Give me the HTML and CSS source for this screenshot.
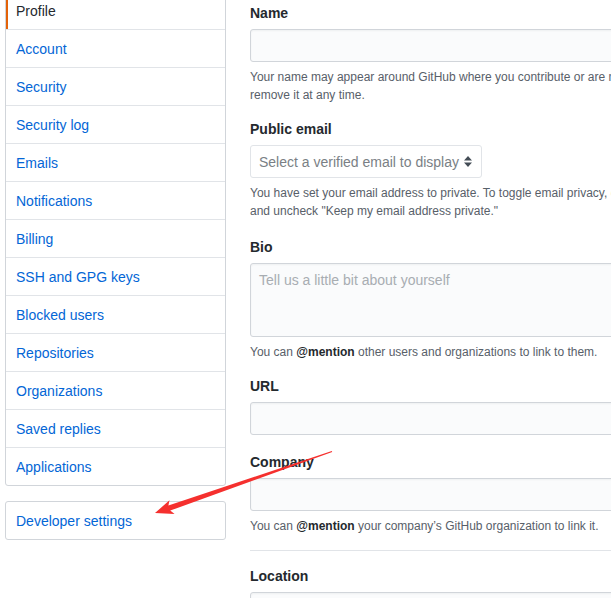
FILE: index.html
```html
<!DOCTYPE html>
<html lang="en">
<head>
    <meta charset="UTF-8">
    <meta name="viewport" content="width=device-width, initial-scale=1.0">
    <title>Public profile</title>
    <link rel="stylesheet" href="styles.css">
</head>
<body>

    <div class="layout">
        <div class="sidebar">
            <nav class="menu">
                <a class="menu-item selected" href="#">Profile</a>
                <a class="menu-item" href="#">Account</a>
                <a class="menu-item" href="#">Security</a>
                <a class="menu-item" href="#">Security log</a>
                <a class="menu-item" href="#">Emails</a>
                <a class="menu-item" href="#">Notifications</a>
                <a class="menu-item" href="#">Billing</a>
                <a class="menu-item" href="#">SSH and GPG keys</a>
                <a class="menu-item" href="#">Blocked users</a>
                <a class="menu-item" href="#">Repositories</a>
                <a class="menu-item" href="#">Organizations</a>
                <a class="menu-item" href="#">Saved replies</a>
                <a class="menu-item" href="#">Applications</a>
            </nav>
            <nav class="menu">
                <a class="menu-item" href="#">Developer settings</a>
            </nav>
        </div>

        <form class="profile-form">
            <div class="form-group">
                <label for="name">Name</label>
                <input class="form-control" type="text" id="name">
                <p class="note">Your name may appear around GitHub where you contribute or are mentioned. You can remove it at any time.</p>
            </div>

            <div class="form-group email-group">
                <label for="email">Public email</label>
                <div class="select">
                    <span>Select a verified email to display</span>
                    <svg width="8" height="11" viewBox="0 0 8 11"><path d="M4 0L8 4.5H0z M4 11L0 6.5H8z" fill="#444d56"/></svg>
                </div>
                <p class="note">You have set your email address to private. To toggle email privacy, go to <a href="#">email settings</a> and uncheck "Keep my email address private."</p>
            </div>

            <div class="form-group">
                <label for="bio">Bio</label>
                <textarea class="form-control bio" id="bio" placeholder="Tell us a little bit about yourself"></textarea>
                <p class="note">You can <strong>@mention</strong> other users and organizations to link to them.</p>
            </div>

            <div class="form-group url-group">
                <label for="url">URL</label>
                <input class="form-control" type="text" id="url">
            </div>

            <div class="form-group">
                <label for="company">Company</label>
                <input class="form-control" type="text" id="company">
                <p class="note">You can <strong>@mention</strong> your company’s GitHub organization to link it.</p>
            </div>

            <hr>

            <div class="form-group">
                <label for="location">Location</label>
                <input class="form-control" type="text" id="location">
            </div>
        </form>
    </div>

    <!-- screenshot annotation -->
    <svg class="annotation" width="611" height="598" viewBox="0 0 611 598">
        <polygon points="155,513 169.5,500.3 168.4,505.4 331.8,451 332.2,452 170.2,510.6 174.6,513.9" fill="#f5302e"/>
    </svg>

</body>
</html>
```

FILE: styles.css
```css
html, body {
    overflow: hidden;
}

body {
    font-family: "Liberation Sans", Arial, sans-serif;
    font-size: 14px;
    color: #24292e;
    margin: 0;
    background: #fff;
}

.layout {
    display: flex;
    gap: 24px;
    margin-top: -9px;
    padding-left: 5px;
}

/* left menu */
.sidebar {
    flex: 0 0 221px;
}

.menu {
    display: flex;
    flex-direction: column;
    border: 1px solid #d1d5da;
    border-radius: 3px;
    margin-bottom: 15px;
}

.menu-item {
    position: relative;
    display: block;
    padding: 9px 10px 7px;
    line-height: 21px;
    color: #0366d6;
    text-decoration: none;
    border-top: 1px solid #e1e4e8;
}

.menu-item:first-child {
    border-top: 0;
}

.menu-item.selected {
    color: #24292e;
}

.menu-item.selected::before {
    content: "";
    position: absolute;
    top: 0;
    bottom: 0;
    left: 0;
    width: 2px;
    background: #e36209;
}

/* form */
.profile-form {
    flex: 0 0 475px;
    padding-top: 12px;
}

.form-group {
    margin-bottom: 15px;
}

.email-group {
    margin-bottom: 17px;
}

.url-group {
    margin-bottom: 17px;
}

.form-group label {
    display: block;
    font-weight: bold;
    line-height: 21px;
    margin-bottom: 5px;
}

.form-control {
    display: block;
    box-sizing: border-box;
    width: 100%;
    height: 33px;
    padding: 6px 8px;
    font-family: inherit;
    font-size: 14px;
    line-height: 20px;
    color: #24292e;
    background: #fafbfc;
    border: 1px solid #d1d5da;
    border-radius: 3px;
    box-shadow: inset 0 1px 2px rgba(27, 31, 35, 0.05);
    outline: none;
    margin: 0;
}

.bio {
    height: 74px;
    resize: none;
}

.bio::placeholder {
    color: #a8adb2;
}

.select {
    display: flex;
    align-items: center;
    justify-content: space-between;
    box-sizing: border-box;
    width: 232px;
    height: 33px;
    padding: 0 9px 0 8px;
    color: #7a7f85;
    background: #fff;
    border: 1px solid #e1e4e8;
    border-radius: 3px;
}

.note {
    margin: 6px 0 0;
    font-size: 12px;
    line-height: 18px;
    color: #586069;
}

.note strong {
    color: #24292e;
}

.note a {
    color: #0366d6;
    text-decoration: none;
}

hr {
    height: 0;
    margin: 0 0 15px;
    border: 0;
    border-top: 1px solid #e1e4e8;
}

.annotation {
    position: absolute;
    top: 0;
    left: 0;
    pointer-events: none;
}
```
